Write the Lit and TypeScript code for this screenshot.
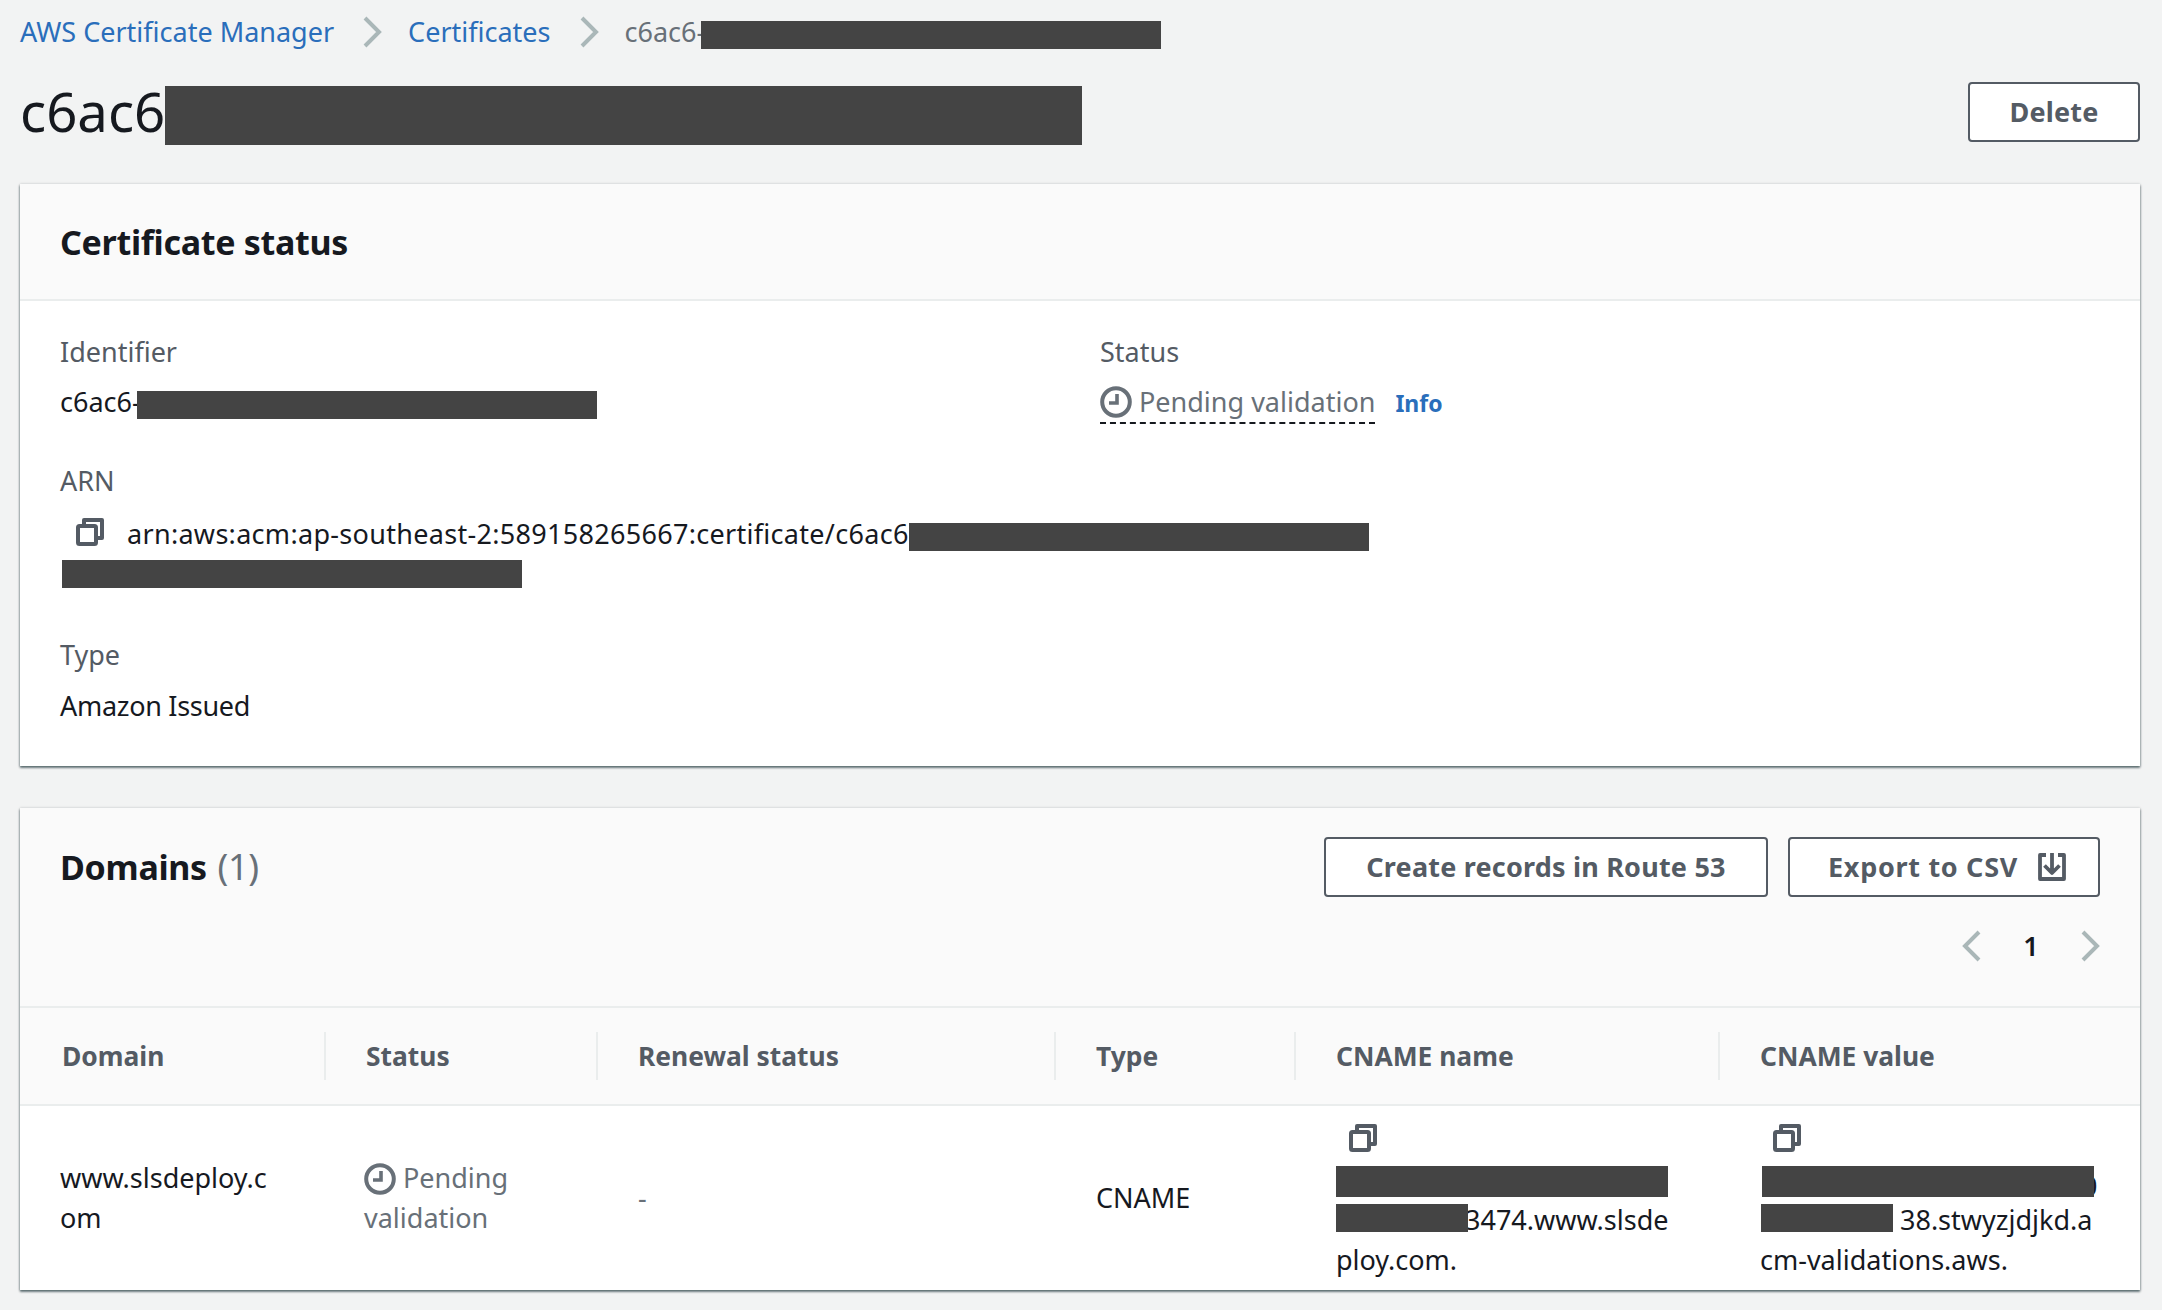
import { LitElement, html, css } from "lit";
import { customElement } from "lit/decorators.js";

const clock = html`<svg class="clock" viewBox="0 0 32 32" fill="none" stroke="#687078" stroke-width="4"><circle cx="16" cy="16" r="13.8"/><path d="M17 8v9H9" stroke-width="3.6"/></svg>`;
const copy = html`<svg class="copy" viewBox="0 0 28 28" fill="none" stroke="#545b64" stroke-width="4" stroke-linejoin="round"><rect x="2" y="8" width="18" height="18" rx="1.5"/><path d="M8 7V2h18v18h-5"/></svg>`;
const right = html`<svg class="chev" viewBox="0 0 20 32" fill="none" stroke="#aab7b8" stroke-width="4"><path d="M3 2l14 14L3 30"/></svg>`;
const left = html`<svg class="chev" viewBox="0 0 20 32" fill="none" stroke="#aab7b8" stroke-width="4"><path d="M17 2L3 16l14 14"/></svg>`;

@customElement("app-root")
export class AppRoot extends LitElement {
  static styles = css`
    :host { display: block; width: 2162px; height: 1310px; box-sizing: border-box; background: #f2f3f3; padding: 12px 22px 0 20px; font-family: "Noto Sans", sans-serif; font-size: 27px; line-height: 40px; color: #16191f; overflow: hidden; }
    .redact { display: inline-block; background: #444; height: 28px; vertical-align: middle; margin-left: -4px; position: relative; }
    a { color: #2a6ebb; text-decoration: none; }
    .crumbs { display: flex; align-items: center; height: 40px; }
    .crumbs .chev { margin: 0 26px 0 28px; }
    .crumbs .cur { color: #687078; white-space: nowrap; }
    .chev { width: 20px; height: 32px; flex: none; }
    .title { display: flex; justify-content: space-between; align-items: center; height: 60px; margin-top: 30px; }
    .title h1 { margin: 0; font-size: 54.5px; font-weight: 400; line-height: 60px; white-space: nowrap; position: relative; top: 2px; }
    .title h1 .redact { height: 59px; margin-left: 0; width: 917px; top: -2px; }
    button { font: inherit; font-weight: 700; font-size: 27px; color: #545b64; background: #fff; border: 2px solid #545b64; border-radius: 4px; height: 60px; box-sizing: border-box; display: inline-flex; align-items: center; justify-content: center; gap: 20px; padding: 0; letter-spacing: .2px; }
    .card { background: #fff; box-shadow: 0 2px 2px rgba(0,28,36,.45), 1px 1px 2px rgba(0,28,36,.2), -1px 1px 2px rgba(0,28,36,.2), 0 -1px 2px rgba(0,28,36,.08); }
    .c1 { margin-top: 42px; height: 582px; }
    .c2 { margin-top: 42px; height: 482px; }
    .head { background: #fafafa; border-bottom: 2px solid #eaeded; height: 115px; padding-left: 40px; display: flex; align-items: center; }
    h2 { margin: 0; font-size: 34px; font-weight: 700; line-height: 44px; letter-spacing: -.3px; }
    h2 span { font-weight: 400; color: #687078; font-size: 36px; margin-left: 2px; }
    .body { padding: 31px 40px 0; display: flex; flex-direction: column; }
    .row { display: grid; grid-template-columns: 1040px 1fr; }
    .lbl { color: #545b64; }
    .val { margin-top: 10px; white-space: nowrap; }
    .arn { margin-top: 37px; }
    .arn .val { margin-top: 13px; }
    .arn .text { letter-spacing: .3px; }
    .arn .flush { margin-left: 0; }
    .arn .icon { display: inline-block; width: 28px; height: 28px; margin: 0 23px 0 16px; vertical-align: -2px; }
    .arn .copy { display: block; width: 28px; height: 28px; }
    .arn .second { display: block; height: 40px; }
    .arn .second .redact { margin-left: 2px; width: 460px; margin-top: 6px; vertical-align: top; }
    .type { margin-top: 41px; }
    .type .val { margin-top: 11px; letter-spacing: -.3px; }
    .status { display: flex; align-items: center; gap: 20px; }
    .pend { display: inline-flex; align-items: center; gap: 7px; color: #687078; border-bottom: 2px dashed #16191f; height: 40px; white-space: nowrap; }
    .clock { width: 32px; height: 32px; flex: none; }
    .info { font-weight: 700; font-size: 23px; }
    .d-head { background: #fafafa; border-bottom: 2px solid #eaeded; height: 169px; padding: 29px 40px 0; }
    .d-top { display: flex; justify-content: space-between; align-items: center; height: 60px; }
    .actions { display: flex; gap: 20px; }
    .b1 { width: 444px; }
    .b2 { width: 312px; letter-spacing: .7px; padding-left: 6px; }
    .exp { width: 28px; height: 28px; }
    .pager { display: flex; justify-content: flex-end; align-items: center; height: 40px; margin-top: 29px; font-weight: 600; }
    .pager .n { width: 30px; text-align: center; margin: 0 34px; }
    .grid { display: grid; grid-template-columns: 306px 272px 458px 240px 424px 1fr; }
    .th { background: #fafafa; height: 96px; border-bottom: 2px solid #eaeded; display: flex; align-items: center; font-weight: 700; font-size: 26.4px; color: #545b64; padding-left: 40px; position: relative; }
    .th.first { padding-left: 42px; }
    .th.sep::after { content: ""; position: absolute; right: 0; top: 24px; bottom: 24px; width: 2px; background: #eaeded; }
    .td { height: 182px; display: flex; flex-direction: column; justify-content: center; padding: 2px 20px 0 40px; box-sizing: border-box; overflow-wrap: anywhere; }
    .pendcell { color: #687078; padding: 2px 40px 0 38px; }
    .pendcell .clock { vertical-align: middle; margin-right: 7px; margin-top: -4px; }
    .dash { color: #687078; }
    .cname { justify-content: flex-start; padding-top: 18px; }
    .cname .copy { display: block; width: 28px; height: 28px; margin: 0 0 14px 13px; }
    .cname .line { height: 40px; white-space: nowrap; }
    .cname .line.top { height: 34px; }
    .cname .redact { margin-left: 0; vertical-align: top; margin-top: 4px; }
    .cname .wide { width: 332px; height: 31px; margin-top: 0; }
    .cname .short { width: 132px; }
    .cut { margin-right: -3px; }
    .cname.value .wide { margin-left: 2px; }
    .peek-r { margin-left: -12px; }
    .peek-l { margin-right: -12px; }
  `;

  render() {
    return html`
      <nav class="crumbs">
        <a href="#">AWS Certificate Manager</a>
        ${right}
        <a href="#">Certificates</a>
        ${right}
        <span class="cur">c6ac6-<span class="redact" style="width:460px"></span></span>
      </nav>
      <div class="title">
        <h1>c6ac6<span class="redact"></span></h1>
        <button style="width:172px">Delete</button>
      </div>

      <section class="card c1">
        <div class="head"><h2>Certificate status</h2></div>
        <div class="body">
          <div class="row">
            <div>
              <div class="lbl">Identifier</div>
              <div class="val">c6ac6-<span class="redact" style="width:460px"></span></div>
            </div>
            <div>
              <div class="lbl">Status</div>
              <div class="val status">
                <span class="pend">${clock}Pending validation</span>
                <a class="info" href="#">Info</a>
              </div>
            </div>
          </div>
          <div class="arn">
            <div class="lbl">ARN</div>
            <div class="val">
              <span class="icon">${copy}</span><span class="text">arn:aws:acm:ap-southeast-2:589158265667:certificate/c6ac6</span><span class="redact flush" style="width:460px"></span>
              <span class="second"><span class="redact"></span></span>
            </div>
          </div>
          <div class="type">
            <div class="lbl">Type</div>
            <div class="val">Amazon Issued</div>
          </div>
        </div>
      </section>

      <section class="card c2">
        <div class="d-head">
          <div class="d-top">
            <h2>Domains <span>(1)</span></h2>
            <div class="actions">
              <button class="b1">Create records in Route 53</button>
              <button class="b2">Export to CSV
                <svg class="exp" viewBox="0 0 28 28" fill="none" stroke="#545b64" stroke-width="3.8" stroke-linejoin="round"><path d="M8 2H2v24h24V2h-6"/><path d="M14 0v20M6.5 12.5L14 20l7.5-7.5"/></svg>
              </button>
            </div>
          </div>
          <div class="pager">
            ${left}
            <span class="n">1</span>
            ${right}
          </div>
        </div>
        <div class="grid">
          <div class="th first sep">Domain</div>
          <div class="th sep">Status</div>
          <div class="th sep">Renewal status</div>
          <div class="th sep">Type</div>
          <div class="th sep">CNAME name</div>
          <div class="th">CNAME value</div>

          <div class="td">www.slsdeploy.c<br />om</div>
          <div class="td pendcell"><span>${clock}Pending<br />validation</span></div>
          <div class="td dash">-</div>
          <div class="td">CNAME</div>
          <div class="td cname">
            ${copy}
            <div class="line top"><span class="redact wide"></span></div>
            <div class="line"><span class="redact short cut"></span>3474.www.slsde</div>
            <div class="line">ploy.com.</div>
          </div>
          <div class="td cname value">
            ${copy}
            <div class="line top"><span class="redact wide"></span><span class="peek-r">0</span></div>
            <div class="line"><span class="peek-l">c</span><span class="redact short"></span>&nbsp;38.stwyzjdjkd.a</div>
            <div class="line">cm-validations.aws.</div>
          </div>
        </div>
      </section>
    `;
  }
}
